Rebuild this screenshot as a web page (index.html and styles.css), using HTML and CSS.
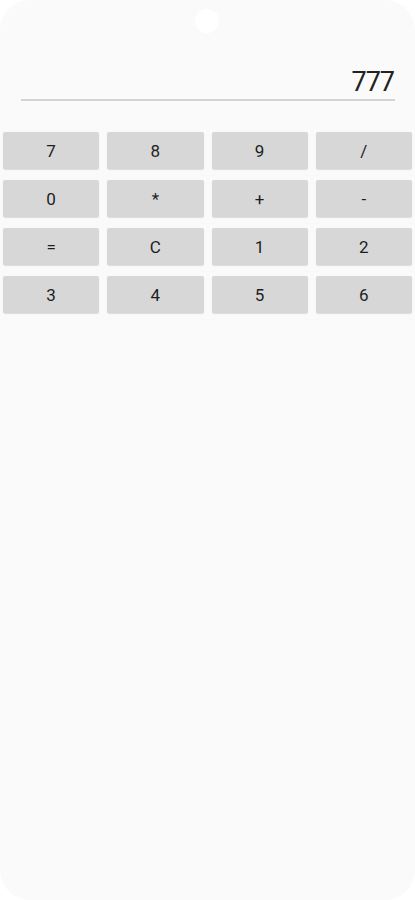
FILE: index.html
```html
<!DOCTYPE html>
<html>
<head>
<meta charset="utf-8">
<link rel="stylesheet" href="styles.css">
</head>
<body>
<div class="screen">
  <div class="camera"></div>
  <div class="display">
    <div class="value">777</div>
  </div>
  <div class="keys">
    <button class="key">7</button>
    <button class="key">8</button>
    <button class="key">9</button>
    <button class="key">/</button>
    <button class="key">0</button>
    <button class="key">*</button>
    <button class="key">+</button>
    <button class="key">-</button>
    <button class="key">=</button>
    <button class="key">C</button>
    <button class="key">1</button>
    <button class="key">2</button>
    <button class="key">3</button>
    <button class="key">4</button>
    <button class="key">5</button>
    <button class="key">6</button>
  </div>
</div>
</body>
</html>
```
FILE: styles.css
```css
html, body {
  margin: 0;
  padding: 0;
  background: #ffffff;
}
body {
  width: 415px;
  height: 900px;
  overflow: hidden;
  font-family: Roboto, "Liberation Sans", sans-serif;
}
.screen {
  position: relative;
  width: 415px;
  height: 900px;
  background: #fafafa;
  border-radius: 30px;
  box-sizing: border-box;
  padding-top: 64px;
}
.camera {
  position: absolute;
  left: 195px;
  top: 9px;
  width: 24px;
  height: 24px;
  border-radius: 50%;
  background: #ffffff;
}
.display {
  margin: 0 20px 0 21px;
  border-bottom: 2px solid #d4d4d4;
  height: 35px;
  display: flex;
  justify-content: flex-end;
  align-items: flex-end;
}
.value {
  font-size: 27px;
  letter-spacing: -1px;
  color: #222222;
  line-height: 30px;
  padding-right: 1px;
  padding-bottom: 2px;
}
.keys {
  display: grid;
  grid-template-columns: repeat(4, 1fr);
  column-gap: 8px;
  row-gap: 11px;
  padding: 31px 3px 0 3px;
}
.key {
  height: 37px;
  border: none;
  border-radius: 2px;
  background: #d7d7d7;
  color: #1e1e1e;
  font-family: Roboto, "Liberation Sans", sans-serif;
  font-size: 17px;
  padding: 0;
  box-shadow: 0 1px 1px rgba(0,0,0,0.12);
}
```
